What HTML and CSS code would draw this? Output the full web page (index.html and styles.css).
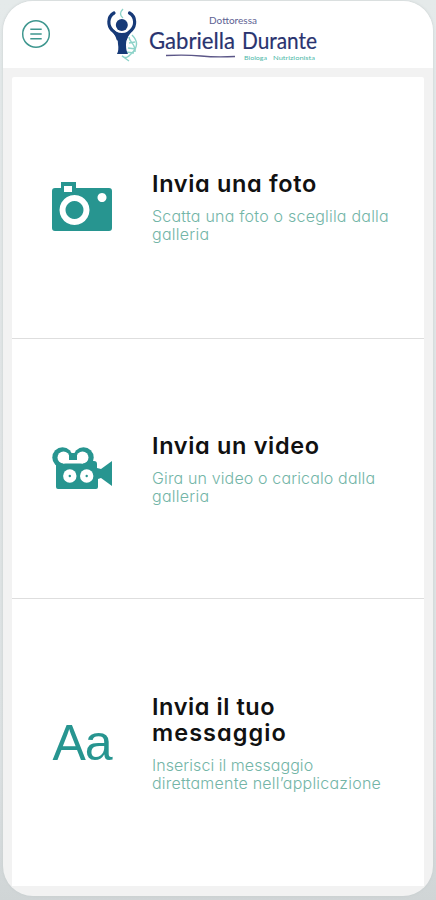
FILE: index.html
```html
<!DOCTYPE html>
<html lang="it">
<head>
<meta charset="utf-8">
<title>Gabriella Durante</title>
<link rel="stylesheet" href="styles.css">
</head>
<body>
<div class="phone">
  <header class="bar">
    <svg class="menu" viewBox="0 0 30 30"><circle cx="15" cy="15" r="13.3"/><path d="M9.300 10.300h11.400M9.300 15h11.400M9.300 19.700h11.400"/></svg>
    <svg class="logo" viewBox="0 0 214 56">
      <path class="helix" d="M19 0q-5 5 0 9M28 26c6 6 6 12 0 18s-6 5-10 3l7 5M25 28c0 5 7 7 6 15M25 34l6-1M24 39l8 1M22 43l8 1"/>
      <path class="arms" d="M10 4C3 8 4 17 8 21q5 4 6 9M25.500 4c7 4 6 13 2 17q-5 4-6 9"/>
      <path class="figure" d="M6 18q6 6 12 6t12-6q-1 4-5 8-3 4-3 10 0 6 2 9H13q2-4 1-10 0-6-3-9-4-4-5-8z"/>
      <circle class="figure" cx="17.800" cy="16" r="6"/>
      <text class="small" x="105" y="14.500" textLength="48" lengthAdjust="spacingAndGlyphs">Dottoressa</text>
      <text class="name" x="45" y="39.500" textLength="86" lengthAdjust="spacingAndGlyphs">Gabriella</text>
      <text class="name" x="138" y="39.500" textLength="75" lengthAdjust="spacingAndGlyphs">Durante</text>
      <path class="rule" d="M62 46.500q20-1 35 .5t34 .5"/>
      <text class="tag" x="140" y="50.500" textLength="23" lengthAdjust="spacingAndGlyphs">Biologa</text>
      <text class="tag" x="169" y="50.500" textLength="42" lengthAdjust="spacingAndGlyphs">Nutrizionista</text>
    </svg>
  </header>
  <main class="list">
    <section class="item first">
      <div class="icon"><svg class="camera" viewBox="0 0 60 50"><path fill-rule="evenodd" d="M9 6V0h15v6h33q3 0 3 3v37q0 3-3 3H3q-3 0-3-3V9q0-3 3-3zM12 4v6h8V4zM50 11a4.500 4.500 0 1 0 .01 0zM22.500 13a15 15 0 1 0 .01 0zM22.500 19a9 9 0 1 1-.01 0z"/></svg></div>
      <div class="text">
        <h2><span class="t1">Invia una foto</span></h2>
        <p><span class="d1">Scatta una foto o sceglila dalla</span><br><span class="d2">galleria</span></p>
      </div>
    </section>
    <section class="item">
      <div class="icon"><svg class="video" viewBox="0 0 60 43">
        <circle cx="10.500" cy="10.500" r="10.200"/><circle cx="31.500" cy="10.500" r="10.200"/>
        <path d="M14 6h14v12H14zM34 14h8q3 0 3 3v4l4 1 11-8v25l-11-8-3 1v8q0 2-2 2H6q-2 0-2-2V18z"/>
        <g class="cut"><circle cx="11.500" cy="10.500" r="6"/><circle cx="30.500" cy="10.500" r="6"/><path d="M11 13h20v3.500H11z"/><circle cx="17.800" cy="29" r="6.700"/><circle cx="34.700" cy="29" r="6.700"/></g>
        <path d="M17 8h8v5h-8z"/><circle cx="17.800" cy="29" r="1.200"/><circle cx="34.700" cy="29" r="1.200"/>
      </svg></div>
      <div class="text">
        <h2><span class="t1">Invia un video</span></h2>
        <p><span class="d3">Gira un video o caricalo dalla</span><br><span class="d2">galleria</span></p>
      </div>
    </section>
    <section class="item last">
      <div class="icon letters">Aa</div>
      <div class="text">
        <h2><span class="t3">Invia il tuo</span><br><span class="t4">messaggio</span></h2>
        <p><span class="d4">Inserisci il messaggio</span><br><span class="d1">direttamente nell’applicazione</span></p>
      </div>
    </section>
  </main>
</div>
</body>
</html>
```
FILE: styles.css
```css
* { box-sizing: border-box; }
body { margin: 0; height: 900px; overflow: hidden; padding: 1px 3px 4px; background: linear-gradient(#e5eaea, #dce1e2 85%, #d0d5d6); }
.phone { height: 895px; border-radius: 30px; overflow: hidden; background: #f2f2f2; box-shadow: 0 0 3px #c5cccd; }
.bar { display: flex; align-items: flex-start; height: 67px; background: #fff; padding: 8px 0 0 18px; }
.menu { width: 30px; height: 30px; margin-top: 10px; fill: none; stroke: #3f978f; stroke-width: 1.5; }
.logo { width: 214px; height: 56px; margin-left: 53px; overflow: visible; }
.figure { fill: #173a78; }
.arms { fill: none; stroke: #173a78; stroke-width: 3.2; stroke-linecap: round; }
.helix { fill: none; stroke: #8dd3c9; stroke-width: 1.4; }
.rule { fill: none; stroke: #5b5687; stroke-width: 1.3; }
.small, .name, .tag { font-family: Lato, sans-serif; }
.small { font-size: 10px; fill: #5d6292; }
.name { font-size: 24px; fill: #29336f; stroke: #29336f; stroke-width: .2; }
.tag { font-size: 6.5px; fill: #4fb9aa; }
.list { display: grid; grid-template-rows: 262px 260px 287px; margin: 9px 9px 0; background: #fff; border-radius: 2px 2px 0 0; }
.item { display: grid; grid-template-columns: 140px 1fr; align-items: center; border-bottom: 1px solid #dedede; }
.first .text { padding-bottom: 2px; }
.last { border-bottom: 0; }
.last .text { padding-top: 1px; }
.icon { display: flex; justify-content: center; color: #279590; }
.icon svg { fill: currentColor; width: 60px; }
.icon .cut { fill: #fff; }
.camera { height: 50px; margin-top: -2px; }
.video { height: 43px; }
.letters { font: 50px/60px "Liberation Sans", sans-serif; letter-spacing: -1px; }
.text { font-family: Inter, sans-serif; font-feature-settings: "cv11"; white-space: nowrap; }
h2 { margin: 0 0 10px; font-size: 23.5px; line-height: 26px; font-weight: 600; color: #111; }
p { margin: 0; font-size: 16px; line-height: 18px; font-weight: 300; color: #73b5a7; }
.t1 { letter-spacing: .66px; }
.t3 { letter-spacing: .58px; }
.t4 { letter-spacing: 1.05px; }
.d1 { letter-spacing: .22px; }
.d2 { letter-spacing: .25px; }
.d3 { letter-spacing: .14px; }
.d4 { letter-spacing: .05px; }
```
